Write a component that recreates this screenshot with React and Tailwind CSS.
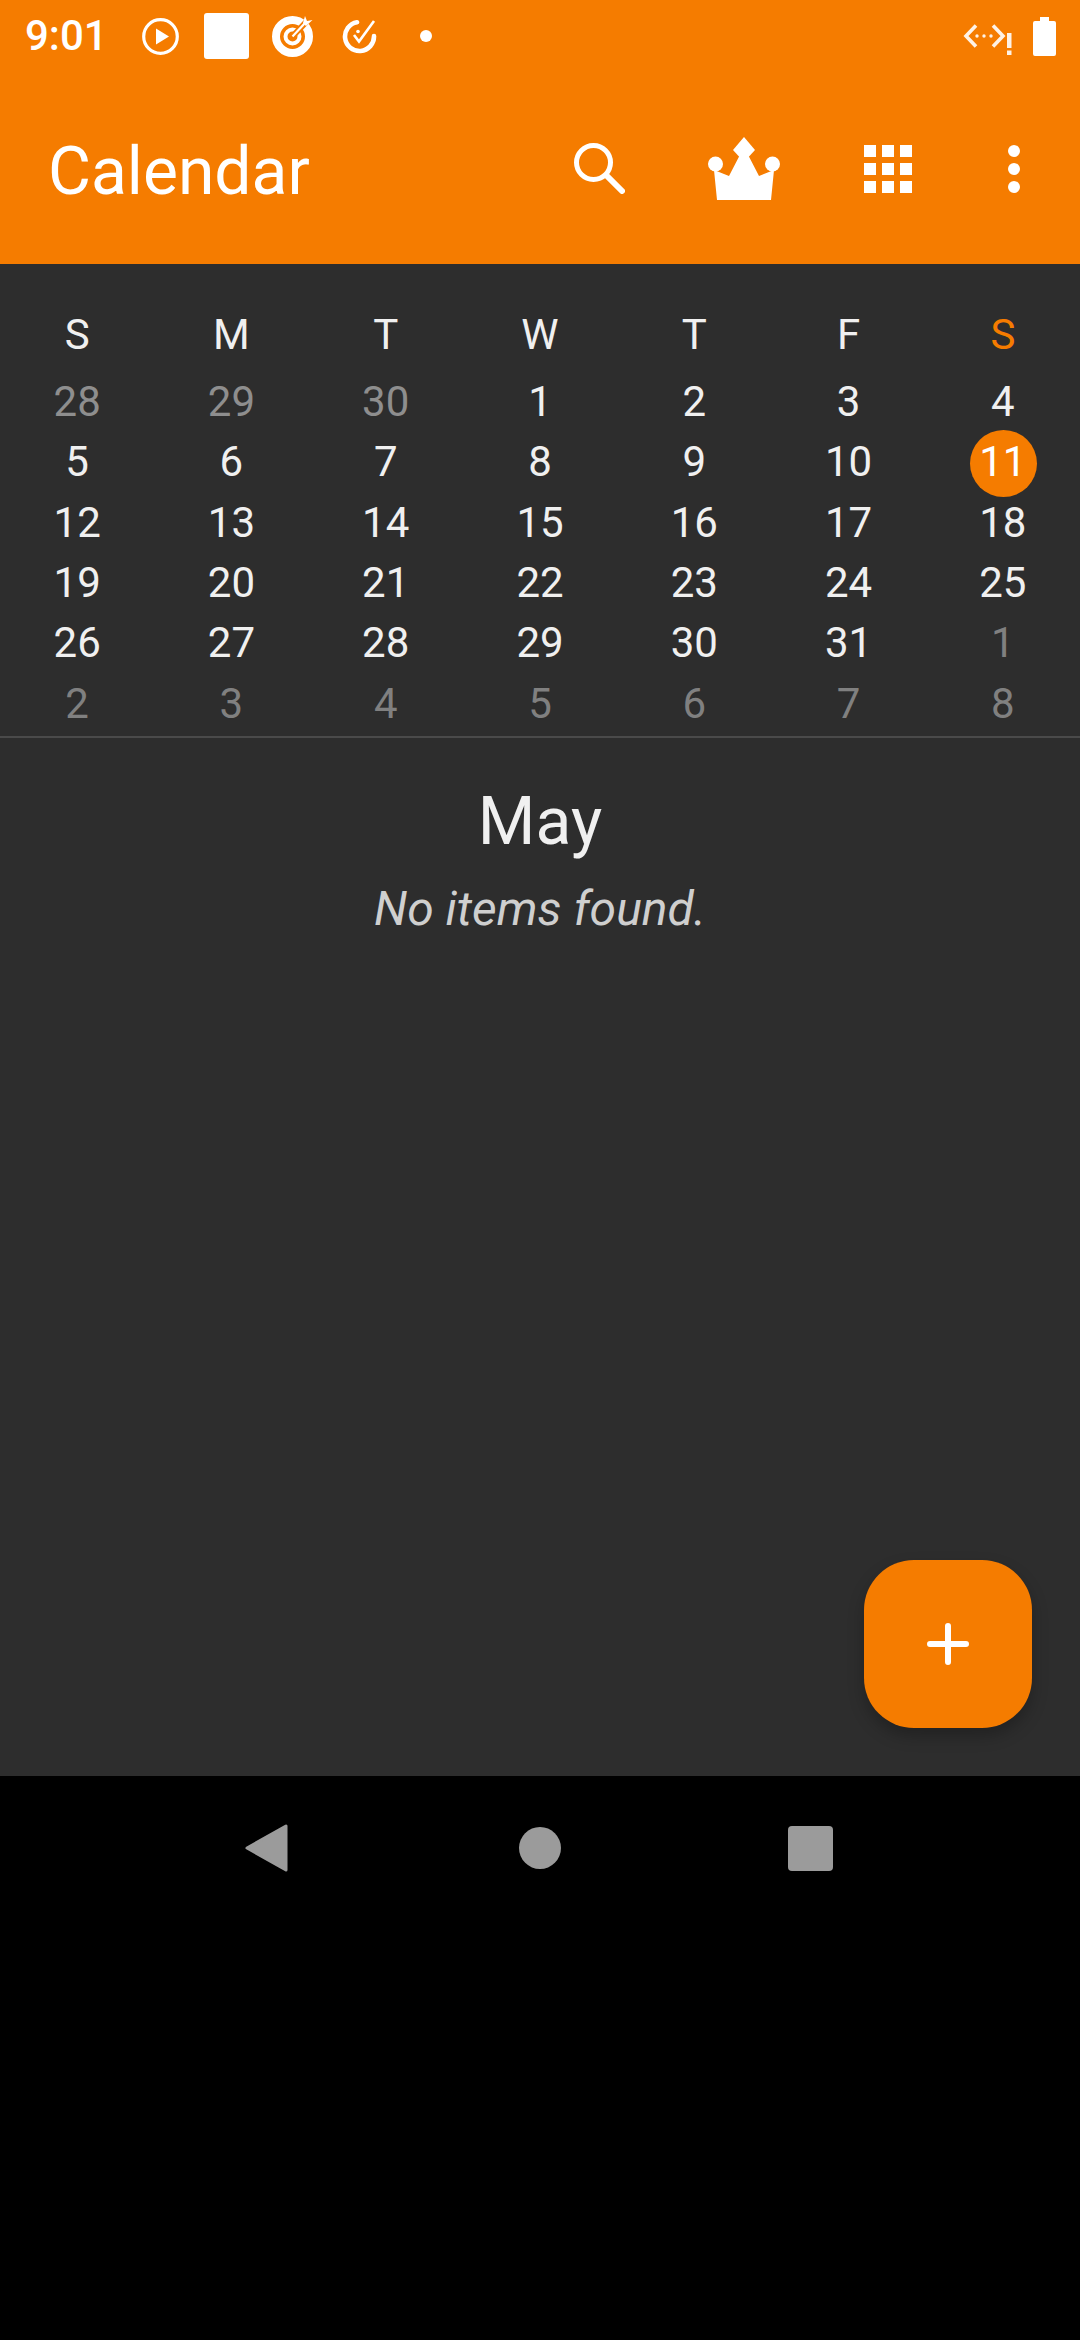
import React from "react";

const rows = [
  [["28", 1], ["29", 1], ["30", 1], ["1"], ["2"], ["3"], ["4"]],
  [["5"], ["6"], ["7"], ["8"], ["9"], ["10"], ["11", 2]],
  [["12"], ["13"], ["14"], ["15"], ["16"], ["17"], ["18"]],
  [["19"], ["20"], ["21"], ["22"], ["23"], ["24"], ["25"]],
  [["26"], ["27"], ["28"], ["29"], ["30"], ["31"], ["1", 3]],
  [["2", 3], ["3", 3], ["4", 3], ["5", 3], ["6", 3], ["7", 3], ["8", 3]],
];
const heads = ["S", "M", "T", "W", "T", "F", "S"];

function StatusIcons() {
  return (
    <>
      <svg className="ml-[44px] shrink-0" width="37" height="37" viewBox="0 0 37 37">
        <circle cx="18.5" cy="18.5" r="16.8" fill="none" stroke="#fff" strokeWidth="3.2" />
        <path d="M14 10.5 L27 18.5 L14 26.5Z" fill="#fff" />
      </svg>
      <div className="ml-[25px] w-[45px] h-[46px] bg-white rounded-[3px] shrink-0" />
      <svg className="ml-[23px] shrink-0" width="41" height="42" viewBox="0 0 41 42">
        <circle cx="20.5" cy="21.5" r="16.5" fill="none" stroke="#fff" strokeWidth="8" />
        <circle cx="20.5" cy="21.5" r="7" fill="none" stroke="#fff" strokeWidth="4" />
        <path d="M20 22 L36 5" stroke="#f57c00" strokeWidth="6" />
        <path d="M20.5 21.5 L33 8" stroke="#fff" strokeWidth="2.2" />
        <path d="M31 8 L33 1 L35 6 L40.5 5 L34 11Z" fill="#fff" />
      </svg>
      <svg className="ml-[29px] shrink-0" width="35" height="35" viewBox="0 0 35 35">
        <path d="M15 3.2 A14.5 14.5 0 1 0 32 17" fill="none" stroke="#fff" strokeWidth="4.6" strokeLinecap="round" />
        <path d="M12 16 L17 22.5 L32 2" fill="none" stroke="#fff" strokeWidth="2.6" />
        <circle cx="16" cy="12.5" r="1.8" fill="#fff" />
      </svg>
      <div className="ml-[43px] w-3 h-3 rounded-full bg-white shrink-0" />
    </>
  );
}

function NoDataIcon() {
  return (
    <svg width="49" height="32" viewBox="0 0 49 32" className="shrink-0 mt-[8px]">
      <path d="M13 1.5 L3 12 L13 22.5" fill="none" stroke="#fff" strokeWidth="3.6" opacity="0.9" />
      <path d="M30 1.5 L40 12 L30 22.5" fill="none" stroke="#fff" strokeWidth="3.6" opacity="0.9" />
      <circle cx="14" cy="12" r="1.7" fill="#fff" opacity="0.9" />
      <circle cx="21" cy="12" r="1.7" fill="#fff" opacity="0.9" />
      <circle cx="28" cy="12" r="1.7" fill="#fff" opacity="0.9" />
      <rect x="44" y="9" width="4.5" height="15" fill="#fff" opacity="0.9" />
      <rect x="44" y="26.5" width="4.5" height="4.5" fill="#fff" opacity="0.9" />
    </svg>
  );
}

export default function App() {
  return (
    <div className="w-[1080px] h-[2340px] flex flex-col bg-black font-['Roboto',sans-serif] overflow-hidden">
      <header className="h-[264px] bg-[#f57c00] text-white shrink-0">
        <div className="h-[72px] flex items-center pl-[25px]">
          <span className="text-[42px] font-medium leading-none w-[73px] whitespace-nowrap">9:01</span>
          <StatusIcons />
          <div className="flex-1" />
          <NoDataIcon />
          <svg className="ml-[21px] mr-[24px] shrink-0" width="23" height="39" viewBox="0 0 23 39">
            <path d="M7 0 H16 V4 H21 Q23 4 23 6 V37 Q23 39 21 39 H2 Q0 39 0 37 V6 Q0 4 2 4 H7Z" fill="#fff" />
          </svg>
        </div>
        <div className="h-[192px] flex items-center pr-3">
          <h1 className="flex-1 pl-[48px] pt-[8px] text-[66px] font-normal leading-none">Calendar</h1>
          <div className="w-[144px] flex justify-center">
            <svg width="51" height="51" viewBox="0 0 51 51" className="-ml-[2px] mt-[1px]">
              <circle cx="19.5" cy="19.5" r="17" fill="none" stroke="#fff" strokeWidth="5" />
              <path d="M33 33 L48 48" stroke="#fff" strokeWidth="6" strokeLinecap="round" />
            </svg>
          </div>
          <div className="w-[144px] flex justify-center">
            <svg width="72" height="64" viewBox="0 0 72 64" className="mt-[1px]">
              <path d="M36 0 L47 13 L36 25 L25 13Z" fill="#fff" />
              <path d="M6 33 L9 63 H63 L66 33 L51 39 L36 10 L21 39Z" fill="#fff" />
              <circle cx="7.5" cy="27" r="7.5" fill="#fff" />
              <circle cx="64.5" cy="27" r="7.5" fill="#fff" />
            </svg>
          </div>
          <div className="w-[144px] flex justify-center">
            <div className="grid grid-cols-3 gap-[6px] mt-[1px]">
              {Array.from({ length: 9 }).map((_, i) => (
                <div key={i} className="w-3 h-3 bg-white" />
              ))}
            </div>
          </div>
          <div className="w-[108px] flex flex-col items-center gap-[6px] mt-[1px]">
            <div className="w-3 h-3 rounded-full bg-white" />
            <div className="w-3 h-3 rounded-full bg-white" />
            <div className="w-3 h-3 rounded-full bg-white" />
          </div>
        </div>
      </header>

      <main className="relative h-[1512px] bg-[#2d2d2d] shrink-0">
        <div className="pt-[41px] h-[431px] border-b-2 border-[#4a4a4a] box-content">
          <div className="grid grid-cols-7 h-[60px] mb-[7px] text-[42px] leading-none">
            {heads.map((h, i) => (
              <div key={i} className={`flex items-center justify-center ${i === 6 ? "text-[#f57c00]" : "text-[#f0f0f0]"}`}>
                {h}
              </div>
            ))}
          </div>
          {rows.map((r, ri) => (
            <div key={ri} className="grid grid-cols-7 h-[60.33px] text-[42px] leading-none">
              {r.map(([t, k], i) => (
                <div
                  key={i}
                  className={`relative flex items-center justify-center ${
                    k === 1 ? "text-[#8e8e8e]" : k === 3 ? "text-[#808080]" : k === 2 ? "text-white" : "text-[#f0f0f0]"
                  }`}
                >
                  {k === 2 && (
                    <div className="absolute left-1/2 top-1/2 w-[67px] h-[67px] -ml-[33px] -mt-[32px] rounded-full bg-[#f57c00]" />
                  )}
                  <span className="relative">{t}</span>
                </div>
              ))}
            </div>
          ))}
        </div>
        <div className="flex flex-col items-center">
          <div className="mt-[52px] text-[#f0f0f0] text-[66px] leading-[64px]">May</div>
          <div className="mt-[27px] text-[#cfcfcf] text-[48px] italic leading-[56px]">No items found.</div>
        </div>
        <button className="absolute right-12 bottom-12 w-[168px] h-[168px] rounded-[50px] bg-[#f57c00] shadow-[0_8px_16px_rgba(0,0,0,0.25)] flex items-center justify-center">
          <svg width="42" height="42" viewBox="0 0 42 42">
            <path d="M3 21 H39 M21 3 V39" stroke="#fff" strokeWidth="6" strokeLinecap="round" />
          </svg>
        </button>
      </main>

      <nav className="h-[144px] flex items-center shrink-0 pl-[245px]">
        <svg width="43" height="48" viewBox="0 0 43 48" className="shrink-0">
          <path d="M41 2 V46 L2 24Z" fill="#9b9b9b" stroke="#9b9b9b" strokeWidth="3" strokeLinejoin="round" />
        </svg>
        <div className="ml-[231px] w-[42px] h-[42px] rounded-full bg-[#9b9b9b] shrink-0" />
        <div className="ml-[227px] w-[45px] h-[45px] rounded-[4px] bg-[#9b9b9b] shrink-0" />
      </nav>
      <div className="flex-1 bg-black" />
    </div>
  );
}
